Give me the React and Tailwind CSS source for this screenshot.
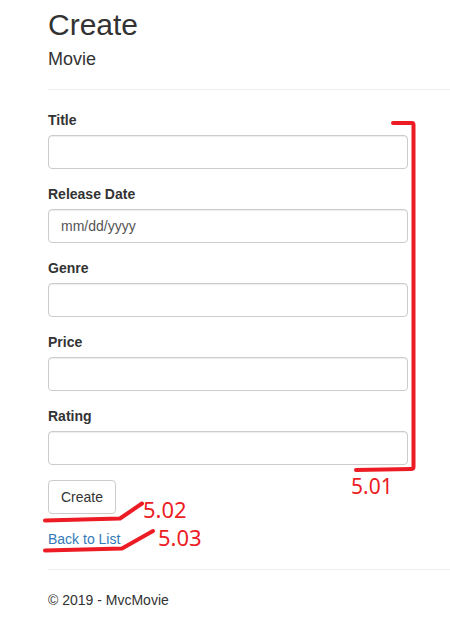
import React from "react";

function Field({ label, placeholder }) {
  return (
    <div className="mb-[15px]">
      <label className="block mb-[5px] text-[14px] leading-[20px] font-bold text-[#333]">{label}</label>
      <input
        type="text"
        placeholder={placeholder}
        className="block w-[360px] h-[34px] px-[12px] py-[6px] text-[14px] leading-[20px] text-[#555] bg-white border border-[#ccc] rounded-[4px] shadow-[inset_0_1px_1px_rgba(0,0,0,0.075)] placeholder:text-[#555] outline-none"
        style={{ fontFamily: '"Liberation Sans", Arial, sans-serif' }}
      />
    </div>
  );
}

export default function App() {
  return (
    <div
      className="relative w-[450px] h-[628px] overflow-hidden bg-white text-[14px] leading-[20px] text-[#333]"
      style={{ fontFamily: '"Liberation Sans", Arial, sans-serif' }}
    >
      <div className="pl-[48px] pt-[8px]">
        <h2 className="text-[30px] leading-[33px] font-medium text-[#333]">Create</h2>
        <h4 className="mt-[8px] text-[18px] leading-[20px] font-medium text-[#333]">Movie</h4>
        <hr className="mt-[20px] mb-[20px] border-0 border-t border-[#eee]" />
        <form onSubmit={(e) => e.preventDefault()}>
          <Field label="Title" />
          <Field label="Release Date" placeholder="mm/dd/yyyy" />
          <Field label="Genre" />
          <Field label="Price" />
          <Field label="Rating" />
          <div className="mb-[15px]">
            <button
              type="submit"
              className="h-[34px] px-[12px] py-[6px] text-[14px] leading-[20px] text-[#333] bg-white border border-[#ccc] rounded-[4px]"
            >
              Create
            </button>
          </div>
        </form>
        <div>
          <a href="#" className="text-[#337ab7] no-underline">Back to List</a>
        </div>
        <hr className="mt-[20px] mb-[20px] border-0 border-t border-[#eee]" />
        <footer>
          <p className="leading-[20px]">© 2019 - MvcMovie</p>
        </footer>
      </div>

      {/* red annotations overlay */}
      <svg
        className="absolute left-0 top-0 pointer-events-none"
        width="450"
        height="628"
        viewBox="0 0 450 628"
        fill="none"
      >
        <path
          d="M393 123 L412 123 Q413.5 123 413.5 125 L413.5 467 Q413.5 469 411 469 L356 470"
          stroke="#ed1c24"
          strokeWidth="4"
          strokeLinecap="round"
          strokeLinejoin="round"
        />
        <path
          d="M45 520.5 L120 518.5 L142 503.5"
          stroke="#ed1c24"
          strokeWidth="4"
          strokeLinecap="round"
          strokeLinejoin="round"
        />
        <path
          d="M45 550.5 L122 548.5 L153 531"
          stroke="#ed1c24"
          strokeWidth="4"
          strokeLinecap="round"
          strokeLinejoin="round"
        />
      </svg>
      <span
        className="absolute left-[351px] top-[476px] text-[21px] leading-none text-[#ed1c24]"
        style={{ fontFamily: '"Noto Sans", "Open Sans", sans-serif' }}
      >
        5.01
      </span>
      <span
        className="absolute left-[143px] top-[498px] text-[22px] leading-none text-[#ed1c24]"
        style={{ fontFamily: '"Noto Sans", "Open Sans", sans-serif' }}
      >
        5.02
      </span>
      <span
        className="absolute left-[158px] top-[526px] text-[22px] leading-none text-[#ed1c24]"
        style={{ fontFamily: '"Noto Sans", "Open Sans", sans-serif' }}
      >
        5.03
      </span>
    </div>
  );
}
